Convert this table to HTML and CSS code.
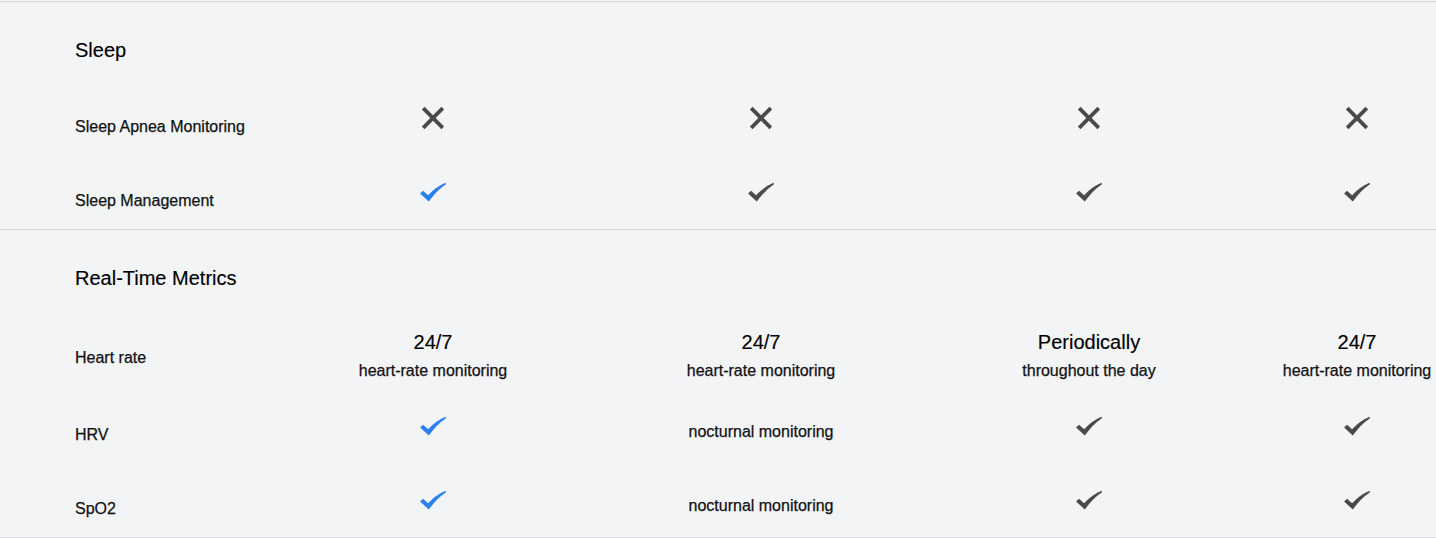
FILE: index.html
```html
<!DOCTYPE html>
<html lang="en">
<head>
<meta charset="utf-8">
<title>Compare</title>
<link rel="stylesheet" href="styles.css">
</head>
<body>
<svg width="0" height="0" class="defs" aria-hidden="true">
  <defs>
    <symbol id="ico-x" viewBox="0 0 24 24">
      <path d="M2.2 2.2 L21.8 21.8 M21.8 2.2 L2.2 21.8" stroke="currentColor" stroke-width="3.8" fill="none"/>
    </symbol>
    <symbol id="ico-check" viewBox="0 0 26 24">
      <path d="M0.1 13.5 L3 10.8 L8.1 15.3 Q15.6 7 25.5 2.8 L26 4.2 Q16.6 10.5 8.8 21.5 Z" fill="currentColor"/>
    </symbol>
  </defs>
</svg>
<div class="table">
  <section class="group">
    <h2 class="group-title">Sleep</h2>
    <div class="row">
      <div class="label">Sleep Apnea Monitoring</div>
      <div class="cell"><svg class="icon icon-x"><use href="#ico-x"/></svg></div>
      <div class="cell"><svg class="icon icon-x"><use href="#ico-x"/></svg></div>
      <div class="cell"><svg class="icon icon-x"><use href="#ico-x"/></svg></div>
      <div class="cell"><svg class="icon icon-x"><use href="#ico-x"/></svg></div>
    </div>
    <div class="row">
      <div class="label">Sleep Management</div>
      <div class="cell"><svg class="icon icon-check blue"><use href="#ico-check"/></svg></div>
      <div class="cell"><svg class="icon icon-check"><use href="#ico-check"/></svg></div>
      <div class="cell"><svg class="icon icon-check"><use href="#ico-check"/></svg></div>
      <div class="cell"><svg class="icon icon-check"><use href="#ico-check"/></svg></div>
    </div>
  </section>
  <section class="group">
    <h2 class="group-title">Real-Time Metrics</h2>
    <div class="row row-tall">
      <div class="label">Heart rate</div>
      <div class="cell value"><span class="big">24/7</span><span class="sub">heart-rate monitoring</span></div>
      <div class="cell value"><span class="big">24/7</span><span class="sub">heart-rate monitoring</span></div>
      <div class="cell value"><span class="big">Periodically</span><span class="sub">throughout the day</span></div>
      <div class="cell value"><span class="big">24/7</span><span class="sub">heart-rate monitoring</span></div>
    </div>
    <div class="row">
      <div class="label">HRV</div>
      <div class="cell"><svg class="icon icon-check blue"><use href="#ico-check"/></svg></div>
      <div class="cell text">nocturnal monitoring</div>
      <div class="cell"><svg class="icon icon-check"><use href="#ico-check"/></svg></div>
      <div class="cell"><svg class="icon icon-check"><use href="#ico-check"/></svg></div>
    </div>
    <div class="row">
      <div class="label">SpO2</div>
      <div class="cell"><svg class="icon icon-check blue"><use href="#ico-check"/></svg></div>
      <div class="cell text">nocturnal monitoring</div>
      <div class="cell"><svg class="icon icon-check"><use href="#ico-check"/></svg></div>
      <div class="cell"><svg class="icon icon-check"><use href="#ico-check"/></svg></div>
    </div>
  </section>
</div>
</body>
</html>
```

FILE: styles.css
```css
html, body {
  margin: 0;
  padding: 0;
  background: #f3f4f6;
  overflow: hidden;
}
body {
  font-family: "Liberation Sans", Arial, sans-serif;
  color: #111;
}
.defs {
  position: absolute;
  width: 0;
  height: 0;
}
.table {
  width: 1461px;
  margin-top: 1px;
  border-bottom: 1px solid #d7d9dc;
}
.group {
  border-top: 1px solid #d7d9dc;
  padding: 36px 0 0 75px;
}
.group-title {
  margin: 0 0 19px;
  font-size: 20px;
  line-height: 24px;
  font-weight: 400;
  color: #000;
  -webkit-text-stroke: 0.15px currentColor;
}
.row {
  display: grid;
  grid-template-columns: 194px 328px 328px 328px 208px;
  height: 74px;
  align-items: start;
}
.row-tall {
  height: 80px;
}
.label {
  padding-top: 36px;
  font-size: 16px;
  line-height: 20px;
  white-space: nowrap;
  -webkit-text-stroke: 0.25px currentColor;
}
.row-tall .label {
  padding-top: 39px;
}
.cell {
  display: flex;
  flex-direction: column;
  align-items: center;
  padding-top: 25px;
  white-space: nowrap;
}
.cell.text {
  padding-top: 33px;
  font-size: 16px;
  line-height: 20px;
  -webkit-text-stroke: 0.25px currentColor;
}
.cell.value {
  padding-top: 21px;
}
.big {
  font-size: 20px;
  line-height: 24px;
  color: #000;
  -webkit-text-stroke: 0.15px currentColor;
}
.sub {
  margin-top: 7px;
  font-size: 16px;
  line-height: 20px;
  -webkit-text-stroke: 0.25px currentColor;
}
.icon {
  display: block;
  color: #4a4a4a;
}
.icon-x {
  width: 24px;
  height: 24px;
}
.icon-check {
  width: 26px;
  height: 24px;
}
.icon.blue {
  color: #2b80f0;
}
```
